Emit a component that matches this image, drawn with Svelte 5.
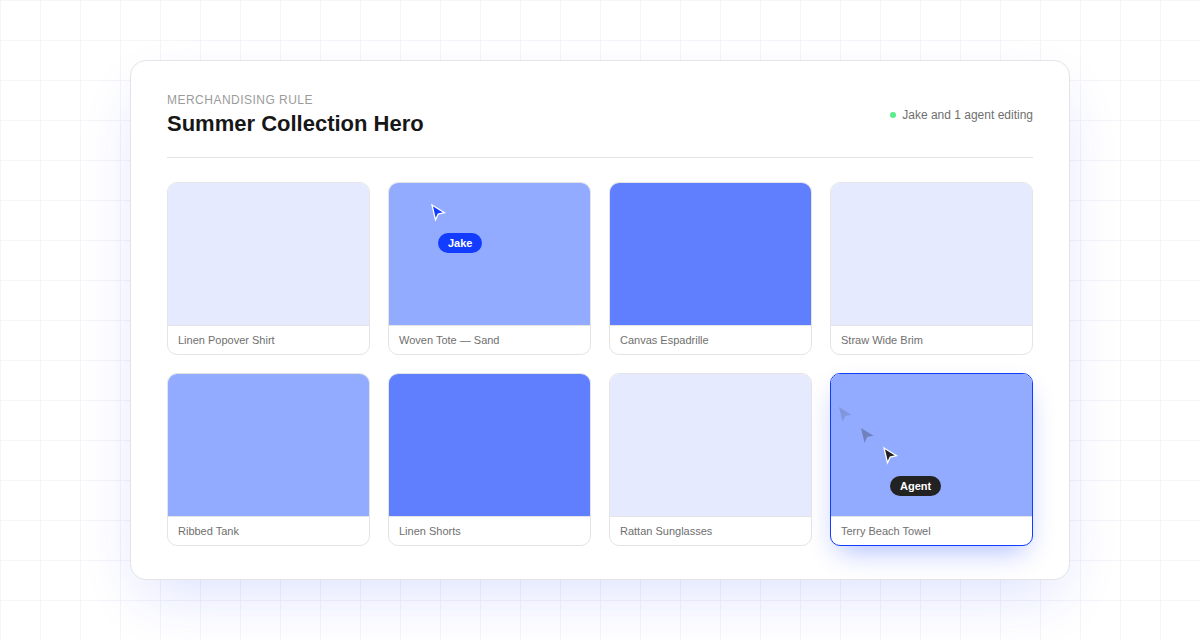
<script>
    const products = [
        { name: "Linen Popover Shirt", tone: "light" },
        { name: "Woven Tote — Sand", tone: "mid", cursor: "jake" },
        { name: "Canvas Espadrille", tone: "deep" },
        { name: "Straw Wide Brim", tone: "light" },
        { name: "Ribbed Tank", tone: "mid" },
        { name: "Linen Shorts", tone: "deep" },
        { name: "Rattan Sunglasses", tone: "light" },
        { name: "Terry Beach Towel", tone: "mid", cursor: "agent" },
    ];

    const arrow = "M3 3L15.4 10.7L9.2 12L6.5 17.8Z";
</script>

<main>
    <section class="panel">
        <header>
            <div>
                <div class="eyebrow">Merchandising rule</div>
                <h1>Summer Collection Hero</h1>
            </div>
            <div class="presence">
                <span class="dot"></span>
                Jake and 1 agent editing
            </div>
        </header>

        <div class="products">
            {#each products as product}
                <article class:selected={product.cursor == "agent"}>
                    <div class="swatch {product.tone}"></div>
                    <div class="name">{product.name}</div>

                    {#if product.cursor == "jake"}
                        <svg class="cursor jake" viewBox="0 0 20 20"><path d={arrow} /></svg>
                        <span class="tag jake">Jake</span>
                    {/if}

                    {#if product.cursor == "agent"}
                        <svg class="cursor ghost far" viewBox="0 0 20 20"><path d={arrow} /></svg>
                        <svg class="cursor ghost near" viewBox="0 0 20 20"><path d={arrow} /></svg>
                        <svg class="cursor agent" viewBox="0 0 20 20"><path d={arrow} /></svg>
                        <span class="tag agent">Agent</span>
                    {/if}
                </article>
            {/each}
        </div>
    </section>
</main>

<style>
    :global(body) {
        margin: 0;
        background: #fff;
    }

    main {
        box-sizing: border-box;
        width: 1200px;
        height: 640px;
        overflow: hidden;
        display: grid;
        place-content: center;
        font-family: "Liberation Sans", Arial, sans-serif;
        background-image: linear-gradient(to right, #f4f4f9 1px, transparent 1px),
            linear-gradient(to bottom, #f4f4f9 1px, transparent 1px);
        background-size: 40px 40px;
    }

    .panel {
        box-sizing: border-box;
        width: 940px;
        height: 520px;
        padding: 31px 36px 0;
        background: #fff;
        border: 1px solid #e4e4e7;
        border-radius: 16px;
        box-shadow: 0 24px 60px -12px rgba(22, 56, 255, 0.15);
    }

    header {
        box-sizing: border-box;
        height: 66px;
        display: flex;
        justify-content: space-between;
        border-bottom: 1px solid #e4e4e7;
    }

    .eyebrow {
        font-size: 12px;
        line-height: 16px;
        letter-spacing: 0.48px;
        text-transform: uppercase;
        color: #9b9b9b;
    }

    h1 {
        margin: 3px 0 0;
        font-size: 22px;
        line-height: 26px;
        font-weight: 700;
        color: #171717;
    }

    .presence {
        display: flex;
        align-items: center;
        align-self: flex-start;
        gap: 6px;
        height: 46px;
        font-size: 12px;
        color: #6f6f6f;
    }

    .dot {
        width: 6px;
        height: 6px;
        border-radius: 50%;
        background: #57ed87;
    }

    .products {
        display: grid;
        grid-template-columns: repeat(4, 1fr);
        gap: 18px;
        margin-top: 24px;
    }

    article {
        position: relative;
        box-sizing: border-box;
        height: 173px;
        background: #fff;
        border: 1px solid #e4e4e7;
        border-radius: 10px;
        overflow: hidden;
    }

    article.selected {
        border-color: #123cff;
        box-shadow: 0 12px 28px -8px rgba(18, 60, 255, 0.36);
    }

    .swatch {
        height: 142px;
    }

    .light {
        background: #e6eaff;
    }

    .mid {
        background: #93abff;
    }

    .deep {
        background: #607fff;
    }

    .name {
        padding: 0 10px;
        border-top: 1px solid #e4e4e7;
        font-size: 11px;
        line-height: 28px;
        color: #6f6f6f;
    }

    .cursor {
        position: absolute;
        width: 20px;
        height: 20px;
        overflow: visible;
        fill: #222;
    }

    .cursor.jake,
    .cursor.agent {
        stroke: #fff;
        stroke-width: 1.3;
    }

    .cursor.jake {
        left: 40px;
        top: 19px;
        fill: #123cff;
    }

    .cursor.agent {
        left: 50px;
        top: 71px;
    }

    .ghost.far {
        left: 5px;
        top: 30px;
        opacity: 0.15;
    }

    .ghost.near {
        left: 27px;
        top: 51px;
        opacity: 0.3;
    }

    .tag {
        position: absolute;
        padding: 0 10px;
        border-radius: 10px;
        font-size: 11px;
        line-height: 20px;
        font-weight: 700;
        color: #fff;
    }

    .tag.jake {
        left: 49px;
        top: 50px;
        background: #123cff;
    }

    .tag.agent {
        left: 59px;
        top: 102px;
        background: #222;
    }
</style>
